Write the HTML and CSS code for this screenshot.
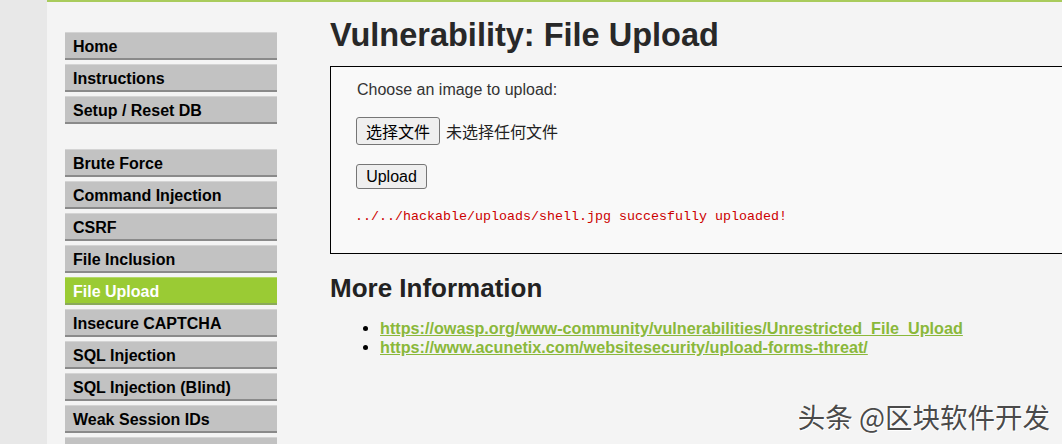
FILE: index.html
```html
<!DOCTYPE html>
<html lang="en">
<head>
<meta charset="UTF-8">
<meta name="viewport" content="width=device-width, initial-scale=1.0">
<title>Vulnerability: File Upload</title>
<link rel="stylesheet" href="styles.css">
</head>
<body>

<div id="page">
  <div id="edge"></div>
  <div id="main">
    <div id="menu">
      <ul class="menu-block">
        <li><a href="#">Home</a></li>
        <li><a href="#">Instructions</a></li>
        <li><a href="#">Setup / Reset DB</a></li>
      </ul>
      <ul class="menu-block">
        <li><a href="#">Brute Force</a></li>
        <li><a href="#">Command Injection</a></li>
        <li><a href="#">CSRF</a></li>
        <li><a href="#">File Inclusion</a></li>
        <li class="selected"><a href="#">File Upload</a></li>
        <li><a href="#">Insecure CAPTCHA</a></li>
        <li><a href="#">SQL Injection</a></li>
        <li><a href="#">SQL Injection (Blind)</a></li>
        <li><a href="#">Weak Session IDs</a></li>
        <li><a href="#"></a></li>
      </ul>
    </div>

    <div id="content">
      <h1>Vulnerability: File Upload</h1>

      <div class="code-area">
        <form>
          <p class="label">Choose an image to upload:</p>
          <div class="file-row">
            <button type="button" class="btn btn-file">选择文件</button>
            <span class="file-name">未选择任何文件</span>
          </div>
          <div class="upload-row">
            <button type="button" class="btn btn-upload">Upload</button>
          </div>
        </form>
        <pre class="result">../../hackable/uploads/shell.jpg succesfully uploaded!</pre>
      </div>

      <h2>More Information</h2>
      <ul class="links">
        <li><a href="#">https://owasp.org/www-community/vulnerabilities/Unrestricted_File_Upload</a></li>
        <li><a href="#">https://www.acunetix.com/websitesecurity/upload-forms-threat/</a></li>
      </ul>
    </div>
  </div>

  <div id="watermark">头条 @区块软件开发</div>
</div>

</body>
</html>
```

FILE: styles.css
```css
html, body {
  margin: 0;
  padding: 0;
  height: 100%;
  overflow: hidden;
}
body {
  background-color: #f4f4f4;
  font-family: "Liberation Sans", Arial, "Noto Sans CJK SC", sans-serif;
  color: #222;
}
#page {
  display: flex;
  position: relative;
  height: 444px;
}
#edge {
  width: 47px;
  flex-shrink: 0;
  background-color: #e8e8e8;
}
#main {
  flex: 1;
  display: flex;
  border-top: 2px solid #a9cb5c;
  background-color: #f4f4f4;
}
#menu {
  width: 212px;
  flex-shrink: 0;
  padding: 30px 0 0 18px;
}
.menu-block {
  list-style: none;
  margin: 0 0 25px 0;
  padding: 0;
}
.menu-block li {
  margin-bottom: 4px;
  background-color: #c2c2c2;
  border-top: 1px solid #d4d4d4;
  border-bottom: 2px solid #8a8a8a;
}
.menu-block li a {
  display: block;
  height: 25px;
  line-height: 27px;
  padding: 0 8px;
  color: #000;
  font-weight: bold;
  font-size: 16px;
  text-decoration: none;
}
.menu-block li.selected {
  background-color: #9acb34;
  border-top-color: #b4d86a;
  border-bottom-color: #8aa95a;
}
.menu-block li.selected a {
  color: #fff;
}
#content {
  padding-left: 53px;
}
h1 {
  margin: 14px 0 0 0;
  font-size: 32.5px;
  line-height: 38px;
  color: #282828;
}
.code-area {
  width: 780px;
  margin-top: 12px;
  border: 1px solid #000;
  background-color: #f9f9f9;
  padding: 13px 26px 31px 26px;
  box-sizing: border-box;
  height: 188px;
}
.code-area form {
  margin: 0;
}
.label {
  margin: 0;
  font-size: 16px;
  line-height: 20px;
  color: #333;
}
.file-row {
  display: flex;
  align-items: center;
  margin-top: 17px;
  margin-left: -1px;
}
.btn {
  background-color: #efefef;
  border: 1px solid #767676;
  border-radius: 3px;
  color: #000;
  font-family: "Liberation Sans", Arial, "Noto Sans CJK SC", sans-serif;
  font-size: 16px;
  padding: 0 9px;
  margin: 0;
}
.btn-file {
  height: 28px;
  width: 84px;
  font-family: "Noto Sans CJK SC", sans-serif;
}
.file-name {
  margin-left: 6px;
  font-family: "Noto Sans CJK SC", sans-serif;
  font-size: 16px;
  color: #222;
}
.upload-row {
  margin-top: 19px;
  margin-left: -1px;
}
.btn-upload {
  height: 25px;
  width: 71px;
}
.result {
  margin: 20px 0 0 -2px;
  font-family: "Liberation Mono", "Courier New", monospace;
  font-size: 13.33px;
  line-height: 16px;
  color: #cc0000;
}
h2 {
  margin: 19px 0 0 0;
  font-size: 26px;
  line-height: 30px;
  color: #222;
}
.links {
  margin: 16px 0 0 0;
  padding-left: 50px;
  font-size: 16.2px;
}
.links li {
  height: 19px;
  line-height: 19px;
  color: #000;
}
.links a {
  color: #8ab83a;
  font-weight: bold;
}
#watermark {
  position: absolute;
  right: 12px;
  bottom: 12px;
  font-family: "Noto Sans CJK SC", sans-serif;
  font-size: 27.5px;
  line-height: 32px;
  color: #4a4a4a;
  text-shadow: 1px 1px 0 #fff, -1px 0 0 #fff;
}
```
